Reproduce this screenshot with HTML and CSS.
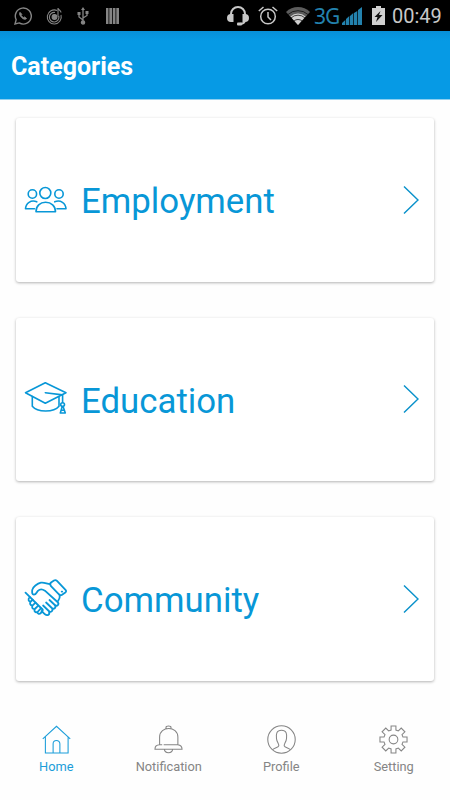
FILE: index.html
```
<!DOCTYPE html>
<html lang="en">
<head>
    <meta charset="UTF-8">
    <meta name="viewport" content="width=device-width, initial-scale=1.0">
    <title>Categories</title>
    <link rel="stylesheet" href="styles.css">
</head>
<body>
    <!-- Status bar -->
    <div class="status-bar">
        <div class="status-left">
            <svg width="18" height="18" viewBox="0 0 18 18" fill="none" stroke="#858585" stroke-width="1.4">
                <path d="M1 17l1.2-4.3A8 8 0 1 1 5.200 15.900z"/>
                <path d="M6 5.300c-1.300 1.400.2 4 1.800 5.400 1.600 1.500 3.700 2.300 4.800.8l-2-1.600-1.300.8-2.200-2.400.8-1z" fill="#858585" stroke-width=".8"/>
            </svg>
            <svg width="17" height="18" viewBox="0 0 17 18" fill="none" stroke="#858585" stroke-width="1.100">
                <path d="M11 3.500A7 7 0 1 0 15 8M9 5.500A4.800 4.800 0 1 0 12.800 9M12 1v8.500M12 1c0 2 3 2 3 4.500"/>
                <circle cx="8.500" cy="10" r="2.400" fill="#858585"/>
            </svg>
            <svg width="12" height="18" viewBox="0 0 12 18" fill="none" stroke="#858585" stroke-width="1.300">
                <path d="M6 2v13M6 13L2 10V7M6 11l4-2.500V6"/>
                <path d="M6 0l2 3H4zM.5 5h3v3h-3zM8.500 4h3v3h-3z" fill="#858585" stroke="none"/>
                <circle cx="6" cy="15.500" r="1.600" fill="#858585"/>
            </svg>
            <svg width="13" height="16" viewBox="0 0 13 16" fill="#858585">
                <path d="M0 0h2.500v16H0zM3.300 0h2.700v16H3.300zM6.800 0h2.700v16H6.800zM10.300 0H13v16h-2.700z"/>
            </svg>
        </div>
        <div class="status-right">
            <svg class="headset" width="22" height="20" viewBox="0 0 22 20" fill="none" stroke="#c8c8c8" stroke-width="2">
                <path d="M4 10V8a7 7 0 0 1 14 0v2M18 14c0 3-2 4-6 4"/>
                <path d="M6.500 8v8H4a4 4 0 0 1 0-8zM15.500 8v8H18a4 4 0 0 0 0-8z" fill="#c8c8c8" stroke="none"/>
                <rect x="10" y="16.500" width="5" height="3" rx="1" fill="#c8c8c8" stroke="none"/>
            </svg>
            <svg class="alarm" width="20" height="19" viewBox="0 0 20 19" fill="none" stroke="#c8c8c8" stroke-width="1.500">
                <circle cx="10" cy="10.500" r="7.300"/>
                <path d="M10 6v5l3 3M.8 5L5.500 1M19.200 5l-4.700-4"/>
            </svg>
            <svg class="wifi" width="24" height="18" viewBox="0 0 24 18">
                <path d="M0 5a17 17 0 0 1 24 0L12 18z" fill="#5c5c5c"/>
                <path d="M4.500 9.500a11 11 0 0 1 15 0L12 18z" fill="#d0d0d0"/>
                <path d="M2 7.500a15 15 0 0 1 20 0M5 11a10 10 0 0 1 14 0M8 14a6 6 0 0 1 8 0" fill="none" stroke="#000" stroke-width=".7"/>
            </svg>
            <span class="network">3G</span>
            <svg class="signal" width="20" height="18" viewBox="0 0 20 18" fill="#2382ae">
                <path d="M0 18v-2l3.300-3v5zM4 18v-6l3.300-3v9zM8 18V9l3.300-3v12zM12 18V6l3.300-2v14zM16 18V3l4-3v18z"/>
            </svg>
            <svg class="battery" width="13" height="19" viewBox="0 0 13 19">
                <path d="M0 2h4V0h5v2h4v17H0z" fill="#d0d0d0"/>
                <path d="M8.500 5L2.500 11h3L4 16l6.500-7H7z" fill="#111"/>
            </svg>
            <span class="clock">00:49</span>
        </div>
    </div>

    <!-- Header -->
    <header class="header">
        <h1>Categories</h1>
    </header>

    <!-- Category cards -->
    <main class="categories">
        <a class="card" href="#">
            <svg class="card-icon" viewBox="0 0 44 44">
                <circle cx="21.300" cy="15" r="5.500"/>
                <circle cx="8.400" cy="16" r="4.200"/>
                <circle cx="35" cy="16" r="4.200"/>
                <path d="M12 33.800c0-5.800 4-9.500 9.600-9.500s9.900 3.700 9.900 9.500z"/>
                <path d="M10.500 30.800H1.500c.3-5.700 5.500-9.300 11.300-7M33 30.800h9c-.3-5.700-5.500-9.300-11.300-7"/>
            </svg>
            <span class="card-title">Employment</span>
            <svg class="chevron" viewBox="0 0 16 30"><path d="M1 1.500l14 13.500L1 28.500"/></svg>
        </a>
        <a class="card" href="#">
            <svg class="card-icon" viewBox="0 0 44 44">
                <path d="M1.500 15.700l19.800-9.900L42 15.700l-20.700 10.600z"/>
                <path d="M8.300 19.500v9.800c5 6.300 21.700 6.300 26.700 0V20"/>
                <path d="M21.300 15.700l17.300 2.200v7.600"/>
                <circle cx="38.600" cy="27.600" r="1.900"/>
                <path d="M38.200 29.600l-1.900 6.400h5l-2.200-6.400M37.500 33.300h3"/>
            </svg>
            <span class="card-title">Education</span>
            <svg class="chevron" viewBox="0 0 16 30"><path d="M1 1.500l14 13.500L1 28.500"/></svg>
        </a>
        <a class="card" href="#">
            <svg class="card-icon handshake" viewBox="0 0 44 44">
                <!-- cuff -->
                <path d="M27 5.500l3-2c1.200-.8 2-.6 3 .4l8.500 9c.9 1 .8 1.800-.2 2.600l-3.600 2.600c-1 .6-1.700.4-2.500-.4L27 9.200c-1-1.300-1.200-2.600 0-3.700z"/>
                <path d="M37.700 14.600h.5"/>
                <!-- upper hand -->
                <path d="M26.300 7.200c-3.600-.3-6-2.200-9.400-1.500-3.300.7-8.400 4.300-8.700 7.300-.2 2.500-.2 4.700 1.700 4.700 2.400 0 2.500-2.200 4-3.800 2.300-2.300 4.700-1.800 7-.2L33.500 25c2.300 2.300-.4 5-2.700 3l-5.300-5"/>
                <path d="M35.700 17.600c.6 3-.4 4.500-1.700 6.500"/>
                <!-- fingers -->
                <path d="M31 28.300c1.500 2.500-1.200 4.600-3.200 2.700l-5.700-5.500M28 31.300c1.500 2.600-1.200 4.700-3.200 2.700l-5.700-5.500M25 34.500c1.300 3.500-2 4.500-4 2.800l-3.500-3.300"/>
                <path d="M1.500 15.700l16 15.800"/>
                <path d="M5.800 20.200c-2.300 2.200-1.200 4.400 1 4.300-1.700 2-.4 4.100 1.900 3.800-1.400 2.200-.2 4 2.100 3.700-1 2.300.4 3.900 2.700 3 0 2 1.900 2.400 3.400 1l1.300-1.600c1.200-1.400.5-2.200-.7-2.900M6.800 24.500l1.900-1.800M8.700 28.300l2.800-2.700M10.800 32l3.200-3.200M13.500 35l2.900-3.200"/>
            </svg>
            <span class="card-title">Community</span>
            <svg class="chevron" viewBox="0 0 16 30"><path d="M1 1.500l14 13.500L1 28.500"/></svg>
        </a>
    </main>

    <!-- Bottom navigation -->
    <nav class="tabs">
        <a class="tab active" href="#">
            <svg viewBox="0 0 30 30">
                <path d="M.8 14.300L15 1.300l14.200 13M3.500 12v17h23.500V12M11.500 29V19.500a3.500 3.500 0 0 1 7 0V29"/>
            </svg>
            <span>Home</span>
        </a>
        <a class="tab" href="#">
            <svg viewBox="0 0 30 30">
                <path d="M12.400 3.700V2.500c0-2 5.200-2 5.200 0v1.200M5.800 20.500v-8c0-11.800 18.900-11.800 18.900 0v8M10 20.500h14.700c3 .5 4.300 2 4.300 4.500H1c0-2.500 1.500-4.300 4.800-4.500h2.700M10.700 25c.5 5 8.100 5 8.600 0"/>
            </svg>
            <span>Notification</span>
        </a>
        <a class="tab" href="#">
            <svg viewBox="0 0 30 30">
                <circle cx="15" cy="15" r="14.200"/>
                <path d="M5.800 25.500c2-1.600 6-2.200 6.400-4 .3-2-2.200-4-2.400-7.500-.5-5 0-8.500 5.200-8.500s5.700 3.500 5.200 8.500c-.2 3.500-2.700 5.500-2.400 7.500.4 1.800 4.400 2.400 6.400 4"/>
            </svg>
            <span>Profile</span>
        </a>
        <a class="tab" href="#">
            <svg viewBox="0 0 30 30">
                <circle cx="15" cy="15" r="4.500"/>
                <path d="M12.500 1h5v4.200l2.500 1 3-3 3.800 3.800-3 3 1 2.500H29v5h-4.200l-1 2.500 3 3-3.800 3.800-3-3-2.500 1V29h-5v-4.200l-2.500-1-3 3L3.200 23l3-3-1-2.500H1v-5h4.200l1-2.500-3-3L7 3.200l3 3 2.500-1z"/>
            </svg>
            <span>Setting</span>
        </a>
    </nav>
</body>
</html>
```
FILE: styles.css
```
* {
    box-sizing: border-box;
}

body {
    display: flex;
    flex-direction: column;
    height: 800px;
    margin: 0;
    background-color: #fefefe;
    font-family: Roboto, sans-serif;
    overflow: hidden;
}

a {
    text-decoration: none;
}

svg {
    display: block;
    flex-shrink: 0;
}

/* Status bar */
.status-bar {
    display: flex;
    justify-content: space-between;
    height: 31px;
    padding: 0 8px 0 14px;
    background-color: #000;
}

.status-left, .status-right {
    display: flex;
    align-items: center;
}

.status-left {
    gap: 14px;
}

.status-left svg:last-child {
    margin-left: 3px;
}

.alarm {
    margin-left: 9px;
}

.wifi {
    margin-left: 8px;
}

.network {
    width: 25px;
    margin-left: 4px;
    color: #2382ae;
    font-family: "Noto Sans", sans-serif;
    font-size: 21px;
    letter-spacing: -1px;
}

.signal {
    margin-left: 3px;
}

.battery {
    margin-left: 10px;
}

.clock {
    width: 50px;
    margin-left: 7px;
    padding-top: 2px;
    color: #c8c8c8;
    font-size: 20px;
    line-height: 31px;
}

/* Header */
.header {
    display: flex;
    align-items: center;
    height: 69px;
    padding: 3px 11px 0;
    background: linear-gradient(#078fd8, #069ae5 10px);
    border-bottom: 1px solid #8fd0f0;
}

.header h1 {
    margin: 0;
    color: #fff;
    font-size: 25px;
    font-weight: 700;
}

/* Cards */
.categories {
    display: flex;
    flex-direction: column;
    gap: 36px;
    padding: 18px 16px 0;
}

.card {
    display: flex;
    align-items: center;
    height: 163.500px;
    padding: 0 15px 0 8px;
    background-color: #fff;
    border-radius: 3px;
    box-shadow: 0 1px 3px rgba(0, 0, 0, 0.3);
}

.card-icon {
    width: 44px;
    height: 44px;
    fill: none;
    stroke: #0897d7;
    stroke-width: 1.600;
    stroke-linecap: round;
    stroke-linejoin: round;
}

.handshake {
    stroke-width: 1.800;
}

.card-title {
    flex: 1;
    margin-left: 13px;
    padding-top: 3px;
    color: #0897d7;
    font-size: 34.800px;
}

.chevron {
    width: 16px;
    height: 30px;
    fill: none;
    stroke: #0b92cb;
    stroke-width: 1.500;
}

/* Bottom navigation */
.tabs {
    display: flex;
    margin-top: auto;
    height: 100px;
    padding-top: 25px;
}

.tab {
    display: flex;
    flex: 1;
    flex-direction: column;
    align-items: center;
    gap: 4px;
    color: #858585;
    font-size: 12.800px;
    line-height: 17px;
}

.tab svg {
    width: 29px;
    height: 29px;
    fill: none;
    stroke: currentColor;
    stroke-width: 1.100;
}

.tab.active {
    color: #1b9dd9;
}
```
